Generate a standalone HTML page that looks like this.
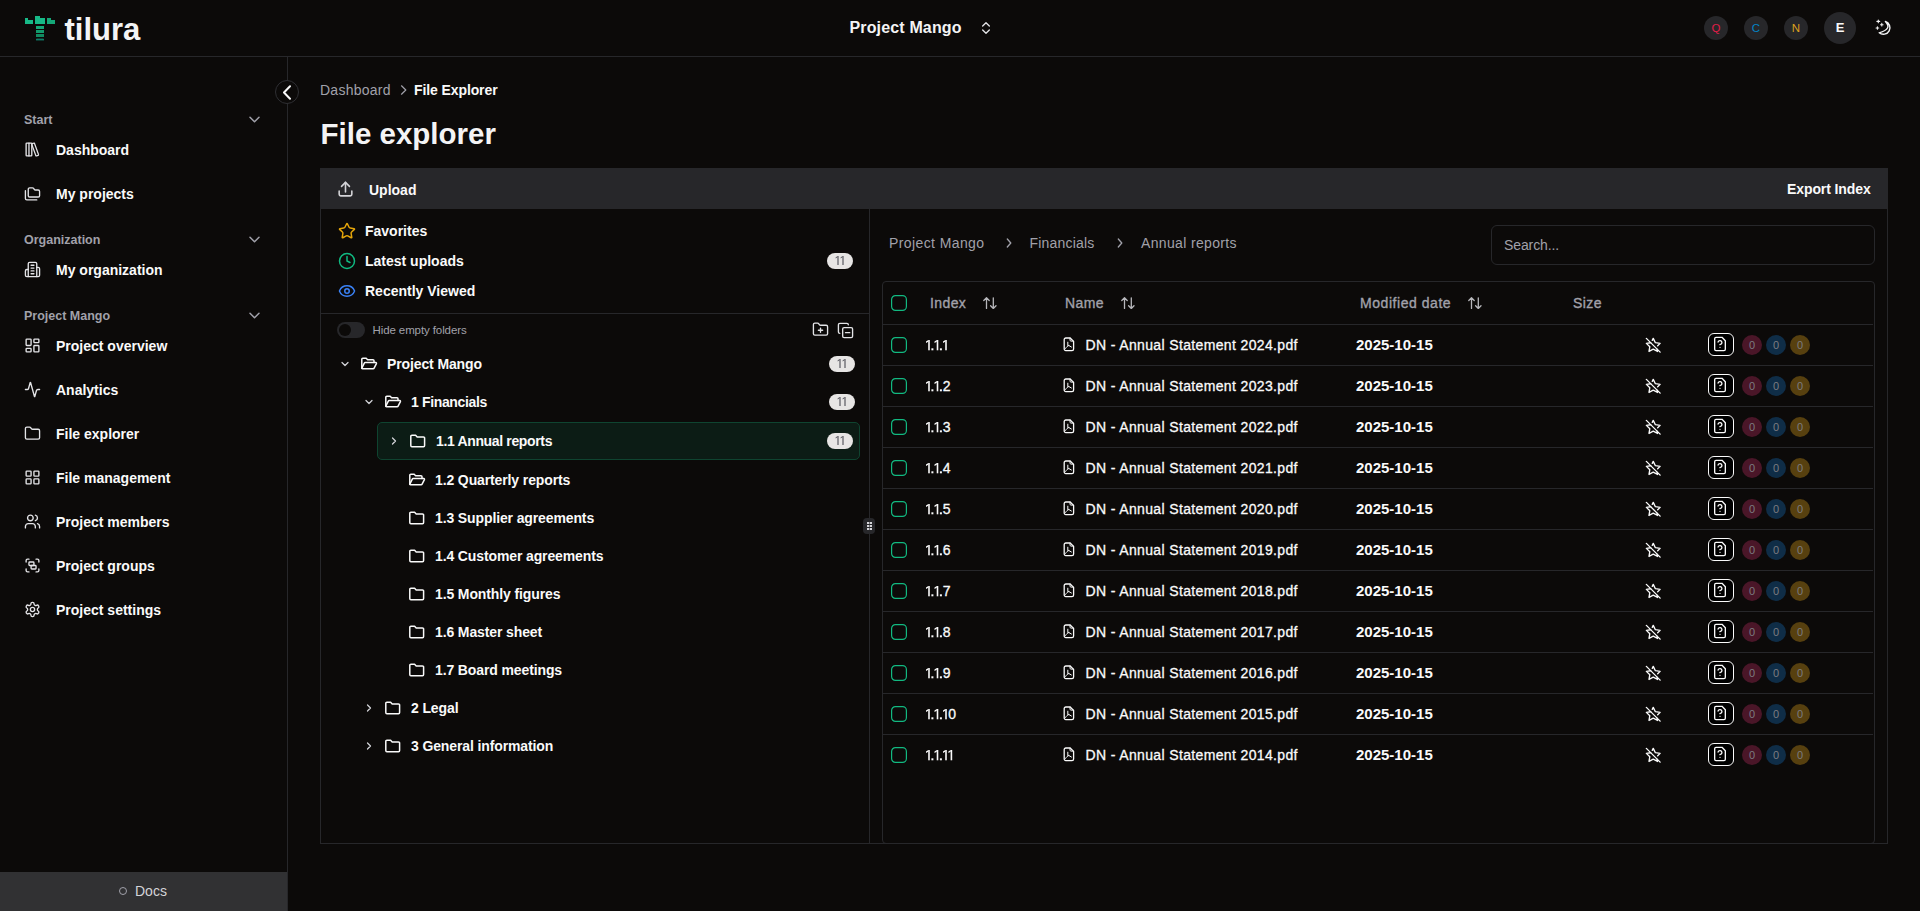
<!DOCTYPE html>
<html><head><meta charset="utf-8"><title>File explorer</title>
<style>
html,body{margin:0;padding:0;}
body{width:1920px;height:911px;overflow:hidden;background:#0c0a09;position:relative;font-family:"Liberation Sans",sans-serif;}
.t{position:absolute;white-space:nowrap;}
.b{position:absolute;box-sizing:content-box;}
.ic{position:absolute;}
.av{position:absolute;border-radius:50%;background:#27272a;text-align:center;display:flex;align-items:center;justify-content:center;font-family:"Liberation Sans",sans-serif;}
.badge{position:absolute;width:26px;height:16px;border-radius:8px;background:#e7e5e4;color:#57534e;font-size:11px;line-height:16px;text-align:center;letter-spacing:-0.5px;}
.cnt{position:absolute;width:20px;height:20px;border-radius:50%;color:#7c7c80;font-size:11px;line-height:20px;text-align:center;}
</style></head><body>
<div class="b" style="left:25px;top:18px;width:3px;height:6px;background:#17b987"></div>
<div class="b" style="left:28px;top:20px;width:5px;height:4px;background:#17b987"></div>
<div class="b" style="left:35px;top:16px;width:4.5px;height:8px;background:#17b987"></div>
<div class="b" style="left:39.5px;top:17.5px;width:5.5px;height:6.5px;background:#17b987"></div>
<div class="b" style="left:47px;top:18px;width:3.5px;height:6px;background:#15a878"></div>
<div class="b" style="left:50.5px;top:20px;width:4.5px;height:4px;background:#15a878"></div>
<div class="b" style="left:36px;top:26px;width:8px;height:3px;background:#15a878"></div>
<div class="b" style="left:36px;top:30px;width:8px;height:3px;background:#129a6c"></div>
<div class="b" style="left:36px;top:34px;width:8px;height:3px;background:#118a60"></div>
<svg class="ic" style="left:36px;top:38px" width="8" height="3" viewBox="0 0 8 3"><path d="M0 0.5 L1 2.5 L2 0.5 L3 2.5 L4 0.5 L5 2.5 L6 0.5 L7 2.5 L8 0.5" stroke="#0f7a66" stroke-width="1" fill="none"/></svg>
<div class="t" style="left:64.5px;top:12.0px;height:36px;line-height:36px;font-size:31px;font-weight:700;color:#f4f4f5;letter-spacing:0px;">tilura</div>
<div class="t" style="left:849.5px;top:15.5px;height:24px;line-height:24px;font-size:16px;font-weight:700;color:#f4f4f5;letter-spacing:0.15px;">Project Mango</div>
<svg class="ic" style="left:978px;top:20px;" width="16" height="16" viewBox="0 0 24 24" fill="none" stroke="#e4e4e7" stroke-width="2" stroke-linecap="round" stroke-linejoin="round"><path d="m7 15 5 5 5-5"/><path d="m7 9 5-5 5 5"/></svg>
<div class="av" style="left:1704px;top:15.5px;width:24px;height:24px;color:#e11d48;font-size:11.5px">Q</div>
<div class="av" style="left:1744px;top:15.5px;width:24px;height:24px;color:#0284c7;font-size:11.5px">C</div>
<div class="av" style="left:1784px;top:15.5px;width:24px;height:24px;color:#dca01e;font-size:11.5px">N</div>
<div class="av" style="left:1824px;top:11.5px;width:32px;height:32px;color:#fafafa;font-size:13px;font-weight:700">E</div>
<svg class="ic" style="left:1870px;top:14px;" width="28" height="28" viewBox="0 0 28 28" fill="none" stroke="#f4f4f5" stroke-width="1.4" stroke-linecap="round" stroke-linejoin="round"><path d="M15.4 7.4 A6.6 6.6 0 1 1 9.2 18.8 Q22.7 14.9 15.4 7.4 Z"/><path d="M8.3 6 v2.8 M6.9 7.4 h2.8 M11.8 9.4 v2.6 M10.5 10.7 h2.6 M7.4 12.7 v2.6 M6.1 14 h2.6" stroke-width="1.1"/></svg>
<div class="b" style="left:0px;top:56px;width:1920px;height:1px;background:#27272a"></div>
<div class="b" style="left:287px;top:57px;width:1px;height:854px;background:#27272a"></div>
<div class="t" style="left:24px;top:111.0px;height:18px;line-height:18px;font-size:12.5px;font-weight:700;color:#a1a1aa;letter-spacing:0px;">Start</div>
<svg class="ic" style="left:249px;top:116px;" width="11" height="7" viewBox="0 0 11 7" fill="none" stroke="#a1a1aa" stroke-width="1.5" stroke-linecap="round" stroke-linejoin="round"><path d="M1 1.2 L5.5 5.7 L10 1.2"/></svg>
<div class="t" style="left:24px;top:231.0px;height:18px;line-height:18px;font-size:12.5px;font-weight:700;color:#a1a1aa;letter-spacing:0px;">Organization</div>
<svg class="ic" style="left:249px;top:236px;" width="11" height="7" viewBox="0 0 11 7" fill="none" stroke="#a1a1aa" stroke-width="1.5" stroke-linecap="round" stroke-linejoin="round"><path d="M1 1.2 L5.5 5.7 L10 1.2"/></svg>
<div class="t" style="left:24px;top:307.0px;height:18px;line-height:18px;font-size:12.5px;font-weight:700;color:#a1a1aa;letter-spacing:0px;">Project Mango</div>
<svg class="ic" style="left:249px;top:312px;" width="11" height="7" viewBox="0 0 11 7" fill="none" stroke="#a1a1aa" stroke-width="1.5" stroke-linecap="round" stroke-linejoin="round"><path d="M1 1.2 L5.5 5.7 L10 1.2"/></svg>
<div class="t" style="left:56px;top:140.0px;height:20px;line-height:20px;font-size:14px;font-weight:700;color:#fafafa;letter-spacing:0px;">Dashboard</div>
<svg class="ic" style="left:23.8px;top:141.4px;" width="17" height="17" viewBox="0 0 24 24" fill="none" stroke="#e4e4e7" stroke-width="1.9" stroke-linecap="round" stroke-linejoin="round"><rect width="8" height="18" x="3" y="3" rx="1"/><path d="M7 3v18"/><path d="M20.4 18.9c.2.5-.1 1.1-.6 1.3l-1.9.7c-.5.2-1.1-.1-1.3-.6L11.1 5.1c-.2-.5.1-1.1.6-1.3l1.9-.7c.5-.2 1.1.1 1.3.6Z"/></svg>
<div class="t" style="left:56px;top:184.0px;height:20px;line-height:20px;font-size:14px;font-weight:700;color:#fafafa;letter-spacing:0px;">My projects</div>
<svg class="ic" style="left:23.8px;top:185.4px;" width="17" height="17" viewBox="0 0 24 24" fill="none" stroke="#e4e4e7" stroke-width="1.9" stroke-linecap="round" stroke-linejoin="round"><path d="M20 17a2 2 0 0 0 2-2V9a2 2 0 0 0-2-2h-3.9a2 2 0 0 1-1.69-.9l-.81-1.2a2 2 0 0 0-1.67-.9H8a2 2 0 0 0-2 2v9a2 2 0 0 0 2 2Z"/><path d="M2 8v11a2 2 0 0 0 2 2h14"/></svg>
<div class="t" style="left:56px;top:260.0px;height:20px;line-height:20px;font-size:14px;font-weight:700;color:#fafafa;letter-spacing:0px;">My organization</div>
<svg class="ic" style="left:23.8px;top:261.4px;" width="17" height="17" viewBox="0 0 24 24" fill="none" stroke="#e4e4e7" stroke-width="1.9" stroke-linecap="round" stroke-linejoin="round"><path d="M6 22V4a2 2 0 0 1 2-2h8a2 2 0 0 1 2 2v18Z"/><path d="M6 12H4a2 2 0 0 0-2 2v6a2 2 0 0 0 2 2h2"/><path d="M18 9h2a2 2 0 0 1 2 2v9a2 2 0 0 1-2 2h-2"/><path d="M10 6h4"/><path d="M10 10h4"/><path d="M10 14h4"/><path d="M10 18h4"/></svg>
<div class="t" style="left:56px;top:336.0px;height:20px;line-height:20px;font-size:14px;font-weight:700;color:#fafafa;letter-spacing:0px;">Project overview</div>
<svg class="ic" style="left:23.8px;top:337.4px;" width="17" height="17" viewBox="0 0 24 24" fill="none" stroke="#e4e4e7" stroke-width="1.9" stroke-linecap="round" stroke-linejoin="round"><rect width="7" height="9" x="3" y="3" rx="1"/><rect width="7" height="5" x="14" y="3" rx="1"/><rect width="7" height="9" x="14" y="12" rx="1"/><rect width="7" height="5" x="3" y="16" rx="1"/></svg>
<div class="t" style="left:56px;top:380.0px;height:20px;line-height:20px;font-size:14px;font-weight:700;color:#fafafa;letter-spacing:0px;">Analytics</div>
<svg class="ic" style="left:23.8px;top:381.4px;" width="17" height="17" viewBox="0 0 24 24" fill="none" stroke="#e4e4e7" stroke-width="1.9" stroke-linecap="round" stroke-linejoin="round"><path d="M22 12h-2.48a2 2 0 0 0-1.93 1.46l-2.35 8.36a.25.25 0 0 1-.48 0L9.24 2.18a.25.25 0 0 0-.48 0l-2.35 8.36A2 2 0 0 1 4.49 12H2"/></svg>
<div class="t" style="left:56px;top:424.0px;height:20px;line-height:20px;font-size:14px;font-weight:700;color:#fafafa;letter-spacing:0px;">File explorer</div>
<svg class="ic" style="left:23.8px;top:425.4px;" width="17" height="17" viewBox="0 0 24 24" fill="none" stroke="#e4e4e7" stroke-width="1.9" stroke-linecap="round" stroke-linejoin="round"><path d="M20 20a2 2 0 0 0 2-2V8a2 2 0 0 0-2-2h-7.9a2 2 0 0 1-1.69-.9L9.6 3.9A2 2 0 0 0 7.93 3H4a2 2 0 0 0-2 2v13a2 2 0 0 0 2 2Z"/></svg>
<div class="t" style="left:56px;top:468.0px;height:20px;line-height:20px;font-size:14px;font-weight:700;color:#fafafa;letter-spacing:0px;">File management</div>
<svg class="ic" style="left:23.8px;top:469.4px;" width="17" height="17" viewBox="0 0 24 24" fill="none" stroke="#e4e4e7" stroke-width="1.9" stroke-linecap="round" stroke-linejoin="round"><rect width="7" height="7" x="3" y="3" rx="1"/><rect width="7" height="7" x="14" y="3" rx="1"/><rect width="7" height="7" x="14" y="14" rx="1"/><rect width="7" height="7" x="3" y="14" rx="1"/></svg>
<div class="t" style="left:56px;top:512.0px;height:20px;line-height:20px;font-size:14px;font-weight:700;color:#fafafa;letter-spacing:0px;">Project members</div>
<svg class="ic" style="left:23.8px;top:513.4px;" width="17" height="17" viewBox="0 0 24 24" fill="none" stroke="#e4e4e7" stroke-width="1.9" stroke-linecap="round" stroke-linejoin="round"><path d="M16 21v-2a4 4 0 0 0-4-4H6a4 4 0 0 0-4 4v2"/><circle cx="9" cy="7" r="4"/><path d="M22 21v-2a4 4 0 0 0-3-3.87"/><path d="M16 3.13a4 4 0 0 1 0 7.75"/></svg>
<div class="t" style="left:56px;top:556.0px;height:20px;line-height:20px;font-size:14px;font-weight:700;color:#fafafa;letter-spacing:0px;">Project groups</div>
<svg class="ic" style="left:23.8px;top:557.4px;" width="17" height="17" viewBox="0 0 24 24" fill="none" stroke="#e4e4e7" stroke-width="1.9" stroke-linecap="round" stroke-linejoin="round"><path d="M3 7V5c0-1.1.9-2 2-2h2"/><path d="M17 3h2c1.1 0 2 .9 2 2v2"/><path d="M21 17v2c0 1.1-.9 2-2 2h-2"/><path d="M7 21H5c-1.1 0-2-.9-2-2v-2"/><rect width="7" height="5" x="7" y="7" rx="1"/><rect width="7" height="5" x="10" y="12" rx="1"/></svg>
<div class="t" style="left:56px;top:600.0px;height:20px;line-height:20px;font-size:14px;font-weight:700;color:#fafafa;letter-spacing:0px;">Project settings</div>
<svg class="ic" style="left:23.8px;top:601.4px;" width="17" height="17" viewBox="0 0 24 24" fill="none" stroke="#e4e4e7" stroke-width="1.9" stroke-linecap="round" stroke-linejoin="round"><path d="M12.22 2h-.44a2 2 0 0 0-2 2v.18a2 2 0 0 1-1 1.73l-.43.25a2 2 0 0 1-2 0l-.15-.08a2 2 0 0 0-2.73.73l-.22.38a2 2 0 0 0 .73 2.73l.15.1a2 2 0 0 1 1 1.72v.51a2 2 0 0 1-1 1.74l-.15.09a2 2 0 0 0-.73 2.73l.22.38a2 2 0 0 0 2.73.73l.15-.08a2 2 0 0 1 2 0l.43.25a2 2 0 0 1 1 1.73V20a2 2 0 0 0 2 2h.44a2 2 0 0 0 2-2v-.18a2 2 0 0 1 1-1.73l.43-.25a2 2 0 0 1 2 0l.15.08a2 2 0 0 0 2.73-.73l.22-.39a2 2 0 0 0-.73-2.73l-.15-.08a2 2 0 0 1-1-1.74v-.5a2 2 0 0 1 1-1.74l.15-.09a2 2 0 0 0 .73-2.73l-.22-.38a2 2 0 0 0-2.73-.73l-.15.08a2 2 0 0 1-2 0l-.43-.25a2 2 0 0 1-1-1.73V4a2 2 0 0 0-2-2z"/><circle cx="12" cy="12" r="3"/></svg>
<div class="b" style="left:0px;top:872px;width:287px;height:39px;background:#313133"></div>
<div class="b" style="left:119px;top:886.5px;width:6px;height:6px;border:1.3px solid #a1a1aa;border-radius:50%"></div>
<div class="t" style="left:135px;top:881.0px;height:20px;line-height:20px;font-size:14px;font-weight:400;color:#d4d4d8;letter-spacing:0px;">Docs</div>
<div class="b" style="left:275px;top:80px;width:22px;height:22px;border:1px solid #2f2f33;border-radius:50%;background:#0c0a09"></div>
<svg class="ic" style="left:282px;top:85px;" width="10" height="15" viewBox="0 0 10 15" fill="none" stroke="#fafafa" stroke-width="2" stroke-linecap="round" stroke-linejoin="round"><path d="M8 1.3 L2 7.5 L8 13.7"/></svg>
<div class="t" style="left:320px;top:80.0px;height:20px;line-height:20px;font-size:14px;font-weight:400;color:#a1a1aa;letter-spacing:0.25px;">Dashboard</div>
<svg class="ic" style="left:400px;top:85px;" width="8" height="10" viewBox="0 0 8 10" fill="none" stroke="#a1a1aa" stroke-width="1.2" stroke-linecap="round" stroke-linejoin="round"><path d="M1.5 0.8 L5.8 5 L1.5 9.2"/></svg>
<div class="t" style="left:414px;top:80.0px;height:20px;line-height:20px;font-size:14px;font-weight:700;color:#fafafa;letter-spacing:-0.1px;">File Explorer</div>
<div class="t" style="left:320.5px;top:115.5px;height:36px;line-height:36px;font-size:29.5px;font-weight:700;color:#f4f4f5;letter-spacing:0px;">File explorer</div>
<div class="b" style="left:320px;top:168px;width:1568px;height:41px;background:#27272a"></div>
<svg class="ic" style="left:335.5px;top:180px;" width="19" height="19" viewBox="0 0 24 24" fill="none" stroke="#d4d4d8" stroke-width="2" stroke-linecap="round" stroke-linejoin="round"><path d="M4 14v4a2 2 0 0 0 2 2h12a2 2 0 0 0 2-2v-4"/><path d="M12 3v12"/><path d="m7 8 5-5 5 5"/></svg>
<div class="t" style="left:369px;top:179.5px;height:20px;line-height:20px;font-size:14px;font-weight:700;color:#fafafa;letter-spacing:0px;">Upload</div>
<div class="t" style="left:1787px;top:179.0px;height:20px;line-height:20px;font-size:14px;font-weight:700;color:#fafafa;letter-spacing:-0.1px;">Export Index</div>
<div class="b" style="left:320px;top:209px;width:1px;height:635px;background:#27272a"></div>
<div class="b" style="left:1887px;top:209px;width:1px;height:635px;background:#27272a"></div>
<div class="b" style="left:320px;top:843px;width:1568px;height:1px;background:#27272a"></div>
<div class="b" style="left:869px;top:209px;width:1px;height:634px;background:#27272a"></div>
<svg class="ic" style="left:338px;top:222px;" width="18" height="18" viewBox="0 0 24 24" fill="none" stroke="#e5a50a" stroke-width="2" stroke-linecap="round" stroke-linejoin="round"><path d="M11.525 2.295a.53.53 0 0 1 .95 0l2.31 4.679a2.123 2.123 0 0 0 1.595 1.16l5.166.756a.53.53 0 0 1 .294.904l-3.736 3.638a2.123 2.123 0 0 0-.611 1.878l.882 5.14a.53.53 0 0 1-.771.56l-4.618-2.428a2.122 2.122 0 0 0-1.973 0L6.396 21.01a.53.53 0 0 1-.77-.56l.881-5.139a2.122 2.122 0 0 0-.611-1.879L2.16 9.795a.53.53 0 0 1 .294-.906l5.165-.755a2.122 2.122 0 0 0 1.597-1.16z"/></svg>
<div class="t" style="left:365px;top:221.0px;height:20px;line-height:20px;font-size:14px;font-weight:700;color:#fafafa;letter-spacing:0px;">Favorites</div>
<svg class="ic" style="left:338px;top:252px;" width="18" height="18" viewBox="0 0 24 24" fill="none" stroke="#10b981" stroke-width="2" stroke-linecap="round" stroke-linejoin="round"><circle cx="12" cy="12" r="10"/><polyline points="12 6 12 12 16 14"/></svg>
<div class="t" style="left:365px;top:251.0px;height:20px;line-height:20px;font-size:14px;font-weight:700;color:#fafafa;letter-spacing:0px;">Latest uploads</div>
<svg class="ic" style="left:338px;top:282px;" width="18" height="18" viewBox="0 0 24 24" fill="none" stroke="#3b82f6" stroke-width="2" stroke-linecap="round" stroke-linejoin="round"><path d="M2.062 12.348a1 1 0 0 1 0-.696 10.75 10.75 0 0 1 19.876 0 1 1 0 0 1 0 .696 10.75 10.75 0 0 1-19.876 0"/><circle cx="12" cy="12" r="3"/></svg>
<div class="t" style="left:365px;top:281.0px;height:20px;line-height:20px;font-size:14px;font-weight:700;color:#fafafa;letter-spacing:0px;">Recently Viewed</div>
<div class="badge" style="left:827px;top:253px"><svg width="26" height="16" viewBox="0 0 26 16" fill="#5a5a62" style="position:absolute;left:0;top:0"><rect x="10.4" y="3" width="1.2" height="9"/><path d="M8.6 4.5 L10.5 3 L10.5 4.3 L8.6 5.5 Z"/><rect x="15.4" y="3" width="1.2" height="9"/><path d="M13.6 4.5 L15.5 3 L15.5 4.3 L13.6 5.5 Z"/></svg></div>
<div class="b" style="left:321px;top:313px;width:548px;height:1px;background:#27272a"></div>
<div class="b" style="left:337px;top:322px;width:28px;height:16px;border-radius:8px;background:#27272a"></div>
<div class="b" style="left:339px;top:324px;width:12px;height:12px;border-radius:50%;background:#0c0a09"></div>
<div class="t" style="left:372.5px;top:322.0px;height:16px;line-height:16px;font-size:11.5px;font-weight:400;color:#a1a1aa;letter-spacing:-0.1px;">Hide empty folders</div>
<svg class="ic" style="left:812.3px;top:321.1px;" width="17" height="17" viewBox="0 0 24 24" fill="none" stroke="#e4e4e7" stroke-width="1.9" stroke-linecap="round" stroke-linejoin="round"><path d="M12 10v6"/><path d="M9 13h6"/><path d="M20 20a2 2 0 0 0 2-2V8a2 2 0 0 0-2-2h-7.9a2 2 0 0 1-1.69-.9L9.6 3.9A2 2 0 0 0 7.93 3H4a2 2 0 0 0-2 2v13a2 2 0 0 0 2 2Z"/></svg>
<svg class="ic" style="left:836.5px;top:321.6px;" width="17" height="17" viewBox="0 0 24 24" fill="none" stroke="#e4e4e7" stroke-width="1.9" stroke-linecap="round" stroke-linejoin="round"><line x1="12" x2="18" y1="15" y2="15"/><rect width="14" height="14" x="8" y="8" rx="2" ry="2"/><path d="M4 16c-1.1 0-2-.9-2-2V4c0-1.1.9-2 2-2h10c1.1 0 2 .9 2 2"/></svg>
<div class="b" style="left:377px;top:422px;width:481px;height:36px;border:1px solid #0f4430;border-radius:5px;background:#0c1c15"></div>
<svg class="ic" style="left:339px;top:358px;" width="12" height="12" viewBox="0 0 24 24" fill="none" stroke="#d4d4d8" stroke-width="2.5" stroke-linecap="round" stroke-linejoin="round"><path d="m6 9 6 6 6-6"/></svg>
<svg class="ic" style="left:360px;top:357px;" width="18" height="14" viewBox="0 0 18 14" fill="none" stroke="#fafafa" stroke-width="1.5" stroke-linecap="round" stroke-linejoin="round"><path d="M1.8 11.2 V2.3 a1 1 0 0 1 1-1 h3.4 l1.4 1.5 h5.4 a1 1 0 0 1 1 1 v1.7"/><path d="M1.8 11.2 l2.5-5 a1 1 0 0 1 .9-.6 h10.6 a.7 .7 0 0 1 .6 1 l-2.3 4.5 a1.2 1.2 0 0 1 -1 .7 h-10.4 a.8 .8 0 0 1 -.8 -.6 z"/></svg>
<div class="t" style="left:387px;top:354.0px;height:20px;line-height:20px;font-size:14px;font-weight:700;color:#fafafa;letter-spacing:-0.12px;">Project Mango</div>
<div class="badge" style="left:829px;top:356px"><svg width="26" height="16" viewBox="0 0 26 16" fill="#5a5a62" style="position:absolute;left:0;top:0"><rect x="10.4" y="3" width="1.2" height="9"/><path d="M8.6 4.5 L10.5 3 L10.5 4.3 L8.6 5.5 Z"/><rect x="15.4" y="3" width="1.2" height="9"/><path d="M13.6 4.5 L15.5 3 L15.5 4.3 L13.6 5.5 Z"/></svg></div>
<svg class="ic" style="left:363px;top:396px;" width="12" height="12" viewBox="0 0 24 24" fill="none" stroke="#d4d4d8" stroke-width="2.5" stroke-linecap="round" stroke-linejoin="round"><path d="m6 9 6 6 6-6"/></svg>
<svg class="ic" style="left:384px;top:395px;" width="18" height="14" viewBox="0 0 18 14" fill="none" stroke="#fafafa" stroke-width="1.5" stroke-linecap="round" stroke-linejoin="round"><path d="M1.8 11.2 V2.3 a1 1 0 0 1 1-1 h3.4 l1.4 1.5 h5.4 a1 1 0 0 1 1 1 v1.7"/><path d="M1.8 11.2 l2.5-5 a1 1 0 0 1 .9-.6 h10.6 a.7 .7 0 0 1 .6 1 l-2.3 4.5 a1.2 1.2 0 0 1 -1 .7 h-10.4 a.8 .8 0 0 1 -.8 -.6 z"/></svg>
<div class="t" style="left:411px;top:392.0px;height:20px;line-height:20px;font-size:14px;font-weight:700;color:#fafafa;letter-spacing:-0.35px;">1 Financials</div>
<div class="badge" style="left:829px;top:394px"><svg width="26" height="16" viewBox="0 0 26 16" fill="#5a5a62" style="position:absolute;left:0;top:0"><rect x="10.4" y="3" width="1.2" height="9"/><path d="M8.6 4.5 L10.5 3 L10.5 4.3 L8.6 5.5 Z"/><rect x="15.4" y="3" width="1.2" height="9"/><path d="M13.6 4.5 L15.5 3 L15.5 4.3 L13.6 5.5 Z"/></svg></div>
<svg class="ic" style="left:388px;top:435px;" width="12" height="12" viewBox="0 0 24 24" fill="none" stroke="#d4d4d8" stroke-width="2.5" stroke-linecap="round" stroke-linejoin="round"><path d="m9 18 6-6-6-6"/></svg>
<svg class="ic" style="left:409px;top:434px;" width="18" height="14" viewBox="0 0 18 14" fill="none" stroke="#fafafa" stroke-width="1.5" stroke-linecap="round" stroke-linejoin="round"><path d="M1.8 2.3 a1.1 1.1 0 0 1 1.1-1.1 h3.7 l1.6 1.7 h6.3 a1.1 1.1 0 0 1 1.1 1.1 v7.6 a1.1 1.1 0 0 1 -1.1 1.1 h-11.6 a1.1 1.1 0 0 1 -1.1 -1.1 z"/></svg>
<div class="t" style="left:436px;top:431.0px;height:20px;line-height:20px;font-size:14px;font-weight:700;color:#fafafa;letter-spacing:-0.35px;">1.1 Annual reports</div>
<div class="badge" style="left:827px;top:433px"><svg width="26" height="16" viewBox="0 0 26 16" fill="#5a5a62" style="position:absolute;left:0;top:0"><rect x="10.4" y="3" width="1.2" height="9"/><path d="M8.6 4.5 L10.5 3 L10.5 4.3 L8.6 5.5 Z"/><rect x="15.4" y="3" width="1.2" height="9"/><path d="M13.6 4.5 L15.5 3 L15.5 4.3 L13.6 5.5 Z"/></svg></div>
<svg class="ic" style="left:408px;top:473px;" width="18" height="14" viewBox="0 0 18 14" fill="none" stroke="#fafafa" stroke-width="1.5" stroke-linecap="round" stroke-linejoin="round"><path d="M1.8 11.2 V2.3 a1 1 0 0 1 1-1 h3.4 l1.4 1.5 h5.4 a1 1 0 0 1 1 1 v1.7"/><path d="M1.8 11.2 l2.5-5 a1 1 0 0 1 .9-.6 h10.6 a.7 .7 0 0 1 .6 1 l-2.3 4.5 a1.2 1.2 0 0 1 -1 .7 h-10.4 a.8 .8 0 0 1 -.8 -.6 z"/></svg>
<div class="t" style="left:435px;top:470.0px;height:20px;line-height:20px;font-size:14px;font-weight:700;color:#fafafa;letter-spacing:-0.12px;">1.2 Quarterly reports</div>
<svg class="ic" style="left:408px;top:511px;" width="18" height="14" viewBox="0 0 18 14" fill="none" stroke="#fafafa" stroke-width="1.5" stroke-linecap="round" stroke-linejoin="round"><path d="M1.8 2.3 a1.1 1.1 0 0 1 1.1-1.1 h3.7 l1.6 1.7 h6.3 a1.1 1.1 0 0 1 1.1 1.1 v7.6 a1.1 1.1 0 0 1 -1.1 1.1 h-11.6 a1.1 1.1 0 0 1 -1.1 -1.1 z"/></svg>
<div class="t" style="left:435px;top:508.0px;height:20px;line-height:20px;font-size:14px;font-weight:700;color:#fafafa;letter-spacing:-0.12px;">1.3 Supplier agreements</div>
<svg class="ic" style="left:408px;top:549px;" width="18" height="14" viewBox="0 0 18 14" fill="none" stroke="#fafafa" stroke-width="1.5" stroke-linecap="round" stroke-linejoin="round"><path d="M1.8 2.3 a1.1 1.1 0 0 1 1.1-1.1 h3.7 l1.6 1.7 h6.3 a1.1 1.1 0 0 1 1.1 1.1 v7.6 a1.1 1.1 0 0 1 -1.1 1.1 h-11.6 a1.1 1.1 0 0 1 -1.1 -1.1 z"/></svg>
<div class="t" style="left:435px;top:546.0px;height:20px;line-height:20px;font-size:14px;font-weight:700;color:#fafafa;letter-spacing:-0.12px;">1.4 Customer agreements</div>
<svg class="ic" style="left:408px;top:587px;" width="18" height="14" viewBox="0 0 18 14" fill="none" stroke="#fafafa" stroke-width="1.5" stroke-linecap="round" stroke-linejoin="round"><path d="M1.8 2.3 a1.1 1.1 0 0 1 1.1-1.1 h3.7 l1.6 1.7 h6.3 a1.1 1.1 0 0 1 1.1 1.1 v7.6 a1.1 1.1 0 0 1 -1.1 1.1 h-11.6 a1.1 1.1 0 0 1 -1.1 -1.1 z"/></svg>
<div class="t" style="left:435px;top:584.0px;height:20px;line-height:20px;font-size:14px;font-weight:700;color:#fafafa;letter-spacing:-0.12px;">1.5 Monthly figures</div>
<svg class="ic" style="left:408px;top:625px;" width="18" height="14" viewBox="0 0 18 14" fill="none" stroke="#fafafa" stroke-width="1.5" stroke-linecap="round" stroke-linejoin="round"><path d="M1.8 2.3 a1.1 1.1 0 0 1 1.1-1.1 h3.7 l1.6 1.7 h6.3 a1.1 1.1 0 0 1 1.1 1.1 v7.6 a1.1 1.1 0 0 1 -1.1 1.1 h-11.6 a1.1 1.1 0 0 1 -1.1 -1.1 z"/></svg>
<div class="t" style="left:435px;top:622.0px;height:20px;line-height:20px;font-size:14px;font-weight:700;color:#fafafa;letter-spacing:-0.12px;">1.6 Master sheet</div>
<svg class="ic" style="left:408px;top:663px;" width="18" height="14" viewBox="0 0 18 14" fill="none" stroke="#fafafa" stroke-width="1.5" stroke-linecap="round" stroke-linejoin="round"><path d="M1.8 2.3 a1.1 1.1 0 0 1 1.1-1.1 h3.7 l1.6 1.7 h6.3 a1.1 1.1 0 0 1 1.1 1.1 v7.6 a1.1 1.1 0 0 1 -1.1 1.1 h-11.6 a1.1 1.1 0 0 1 -1.1 -1.1 z"/></svg>
<div class="t" style="left:435px;top:660.0px;height:20px;line-height:20px;font-size:14px;font-weight:700;color:#fafafa;letter-spacing:-0.12px;">1.7 Board meetings</div>
<svg class="ic" style="left:363px;top:702px;" width="12" height="12" viewBox="0 0 24 24" fill="none" stroke="#d4d4d8" stroke-width="2.5" stroke-linecap="round" stroke-linejoin="round"><path d="m9 18 6-6-6-6"/></svg>
<svg class="ic" style="left:384px;top:701px;" width="18" height="14" viewBox="0 0 18 14" fill="none" stroke="#fafafa" stroke-width="1.5" stroke-linecap="round" stroke-linejoin="round"><path d="M1.8 2.3 a1.1 1.1 0 0 1 1.1-1.1 h3.7 l1.6 1.7 h6.3 a1.1 1.1 0 0 1 1.1 1.1 v7.6 a1.1 1.1 0 0 1 -1.1 1.1 h-11.6 a1.1 1.1 0 0 1 -1.1 -1.1 z"/></svg>
<div class="t" style="left:411px;top:698.0px;height:20px;line-height:20px;font-size:14px;font-weight:700;color:#fafafa;letter-spacing:-0.12px;">2 Legal</div>
<svg class="ic" style="left:363px;top:740px;" width="12" height="12" viewBox="0 0 24 24" fill="none" stroke="#d4d4d8" stroke-width="2.5" stroke-linecap="round" stroke-linejoin="round"><path d="m9 18 6-6-6-6"/></svg>
<svg class="ic" style="left:384px;top:739px;" width="18" height="14" viewBox="0 0 18 14" fill="none" stroke="#fafafa" stroke-width="1.5" stroke-linecap="round" stroke-linejoin="round"><path d="M1.8 2.3 a1.1 1.1 0 0 1 1.1-1.1 h3.7 l1.6 1.7 h6.3 a1.1 1.1 0 0 1 1.1 1.1 v7.6 a1.1 1.1 0 0 1 -1.1 1.1 h-11.6 a1.1 1.1 0 0 1 -1.1 -1.1 z"/></svg>
<div class="t" style="left:411px;top:736.0px;height:20px;line-height:20px;font-size:14px;font-weight:700;color:#fafafa;letter-spacing:-0.12px;">3 General information</div>
<div class="b" style="left:863px;top:518px;width:12px;height:16px;border-radius:4px;background:#27272a"></div>
<div class="b" style="left:867px;top:522px;width:1.6px;height:1.8px;background:#d4d4d8"></div><div class="b" style="left:870.4px;top:522px;width:1.6px;height:1.8px;background:#d4d4d8"></div>
<div class="b" style="left:868.6px;top:522px;width:1.8px;height:1.8px;background:#6b6b70"></div>
<div class="b" style="left:867px;top:525px;width:1.6px;height:1.8px;background:#d4d4d8"></div><div class="b" style="left:870.4px;top:525px;width:1.6px;height:1.8px;background:#d4d4d8"></div>
<div class="b" style="left:868.6px;top:525px;width:1.8px;height:1.8px;background:#6b6b70"></div>
<div class="b" style="left:867px;top:528px;width:1.6px;height:1.8px;background:#d4d4d8"></div><div class="b" style="left:870.4px;top:528px;width:1.6px;height:1.8px;background:#d4d4d8"></div>
<div class="b" style="left:868.6px;top:528px;width:1.8px;height:1.8px;background:#6b6b70"></div>
<div class="t" style="left:889px;top:233.0px;height:20px;line-height:20px;font-size:14px;font-weight:400;color:#a1a1aa;letter-spacing:0.4px;">Project Mango</div>
<svg class="ic" style="left:1006px;top:238px;" width="8" height="10" viewBox="0 0 8 10" fill="none" stroke="#a1a1aa" stroke-width="1.3" stroke-linecap="round" stroke-linejoin="round"><path d="M1.3 1 L4.8 5 L1.3 9"/></svg>
<div class="t" style="left:1029.5px;top:233.0px;height:20px;line-height:20px;font-size:14px;font-weight:400;color:#a1a1aa;letter-spacing:0.2px;">Financials</div>
<svg class="ic" style="left:1117px;top:238px;" width="8" height="10" viewBox="0 0 8 10" fill="none" stroke="#a1a1aa" stroke-width="1.3" stroke-linecap="round" stroke-linejoin="round"><path d="M1.3 1 L4.8 5 L1.3 9"/></svg>
<div class="t" style="left:1141px;top:233.0px;height:20px;line-height:20px;font-size:14px;font-weight:400;color:#a1a1aa;letter-spacing:0.35px;">Annual reports</div>
<div class="b" style="left:1491px;top:225px;width:382px;height:38px;border:1px solid #27272a;border-radius:6px"></div>
<div class="t" style="left:1504px;top:235.0px;height:20px;line-height:20px;font-size:14px;font-weight:400;color:#a1a1aa;letter-spacing:-0.1px;">Search...</div>
<div class="b" style="left:882px;top:281px;width:991px;height:561px;border:1px solid #27272a;border-radius:4px"></div>
<svg class="ic" style="left:891px;top:295px" width="16" height="16" viewBox="0 0 16 16"><rect x="0.6" y="0.6" width="14.8" height="14.8" rx="3.8" fill="none" stroke="#12b981" stroke-width="1.2"/></svg>
<div class="t" style="left:930px;top:293.0px;height:20px;line-height:20px;font-size:14px;font-weight:400;color:#a1a1aa;letter-spacing:0.4px;-webkit-text-stroke:0.35px #a1a1aa;">Index</div>
<svg class="ic" style="left:983px;top:297px;" width="14" height="12" viewBox="0 0 14 12" fill="none" stroke="#b8b8bc" stroke-width="1.3" stroke-linecap="round" stroke-linejoin="round"><path d="M3.5 11.5 V0.8 M0.8 3.5 L3.5 0.8 L6.2 3.5 M10.3 0.8 V11.5 M7.6 8.8 L10.3 11.5 L13 8.8"/></svg>
<div class="t" style="left:1065px;top:293.0px;height:20px;line-height:20px;font-size:14px;font-weight:400;color:#a1a1aa;letter-spacing:0.4px;-webkit-text-stroke:0.35px #a1a1aa;">Name</div>
<svg class="ic" style="left:1121px;top:297px;" width="14" height="12" viewBox="0 0 14 12" fill="none" stroke="#b8b8bc" stroke-width="1.3" stroke-linecap="round" stroke-linejoin="round"><path d="M3.5 11.5 V0.8 M0.8 3.5 L3.5 0.8 L6.2 3.5 M10.3 0.8 V11.5 M7.6 8.8 L10.3 11.5 L13 8.8"/></svg>
<div class="t" style="left:1360px;top:293.0px;height:20px;line-height:20px;font-size:14px;font-weight:400;color:#a1a1aa;letter-spacing:0.55px;-webkit-text-stroke:0.35px #a1a1aa;">Modified date</div>
<svg class="ic" style="left:1468px;top:297px;" width="14" height="12" viewBox="0 0 14 12" fill="none" stroke="#b8b8bc" stroke-width="1.3" stroke-linecap="round" stroke-linejoin="round"><path d="M3.5 11.5 V0.8 M0.8 3.5 L3.5 0.8 L6.2 3.5 M10.3 0.8 V11.5 M7.6 8.8 L10.3 11.5 L13 8.8"/></svg>
<div class="t" style="left:1573px;top:293.0px;height:20px;line-height:20px;font-size:14px;font-weight:400;color:#a1a1aa;letter-spacing:0.4px;-webkit-text-stroke:0.35px #a1a1aa;">Size</div>
<div class="b" style="left:883px;top:324px;width:990px;height:1px;background:#27272a"></div>
<div class="b" style="left:883px;top:365px;width:990px;height:1px;background:#27272a"></div>
<svg class="ic" style="left:891px;top:337px" width="16" height="16" viewBox="0 0 16 16"><rect x="0.6" y="0.6" width="14.8" height="14.8" rx="3.8" fill="none" stroke="#12b981" stroke-width="1.2"/></svg>
<svg class="ic" style="left:926px;top:338.7px" width="40" height="14" viewBox="0 0 40 14" fill="#fafafa"><rect x="2.20" y="1" width="1.6" height="10.3"/><path d="M0.00 2.6 L2.30 1 L2.30 2.7 L0.00 4.0 Z"/><rect x="5.40" y="9.3" width="2" height="2"/><rect x="10.70" y="1" width="1.6" height="10.3"/><path d="M8.50 2.6 L10.80 1 L10.80 2.7 L8.50 4.0 Z"/><rect x="13.90" y="9.3" width="2" height="2"/><rect x="19.20" y="1" width="1.6" height="10.3"/><path d="M17.00 2.6 L19.30 1 L19.30 2.7 L17.00 4.0 Z"/></svg>
<svg class="ic" style="left:1063.2px;top:337px;" width="12" height="15" viewBox="0 0 12 15" fill="none" stroke="#fafafa" stroke-width="1.3" stroke-linecap="round" stroke-linejoin="round"><path d="M1.2 2.6a1.6 1.6 0 0 1 1.6-1.6h4.4l3.4 3.4v7.6a1.6 1.6 0 0 1-1.6 1.6h-6.2a1.6 1.6 0 0 1-1.6-1.6z"/><path d="M7 1.2v1.9a1 1 0 0 0 1 1h2.2" stroke-width="1"/><path d="M4.8 5.2v3.2 M2.6 11.4c.9-1.5 2-2.6 3.2-2.9 M5.8 8.5l2.6 1.5" stroke-width="1"/></svg>
<div class="t" style="left:1085.5px;top:335.0px;height:20px;line-height:20px;font-size:14px;font-weight:400;color:#fafafa;letter-spacing:0.36px;-webkit-text-stroke:0.3px #fafafa;">DN - Annual Statement 2024.pdf</div>
<div class="t" style="left:1356px;top:335.0px;height:20px;line-height:20px;font-size:15px;font-weight:700;color:#fafafa;letter-spacing:0px;">2025-10-15</div>
<svg class="ic" style="left:1645.3px;top:336.8px;" width="16.5" height="16.5" viewBox="0 0 24 24" fill="none" stroke="#fafafa" stroke-width="2" stroke-linecap="round" stroke-linejoin="round"><path d="M8.34 8.34 2 9.27l5 4.87L5.82 21 12 17.77 18.18 21l-.59-3.43"/><path d="M18.42 12.76 22 9.27l-6.91-1L12 2l-1.44 2.91"/><line x1="2" x2="22" y1="2" y2="22"/></svg>
<div class="b" style="left:1708px;top:332.5px;width:23.5px;height:21px;border:1.5px solid #fafafa;border-radius:6px;background:#000"></div>
<svg class="ic" style="left:1712px;top:336px;" width="16" height="16" viewBox="0 0 24 24" fill="none" stroke="#fafafa" stroke-width="2" stroke-linecap="round" stroke-linejoin="round"><path d="M12 17h.01"/><path d="M15 2H6a2 2 0 0 0-2 2v16a2 2 0 0 0 2 2h12a2 2 0 0 0 2-2V7z"/><path d="M9.1 9a3 3 0 0 1 5.82 1c0 2-3 3-3 3"/></svg>
<div class="cnt" style="left:1742px;top:334.5px;background:#4a1628">0</div>
<div class="cnt" style="left:1766px;top:334.5px;background:#0f2d47">0</div>
<div class="cnt" style="left:1790px;top:334.5px;background:#57400f">0</div>
<div class="b" style="left:883px;top:406px;width:990px;height:1px;background:#27272a"></div>
<svg class="ic" style="left:891px;top:378px" width="16" height="16" viewBox="0 0 16 16"><rect x="0.6" y="0.6" width="14.8" height="14.8" rx="3.8" fill="none" stroke="#12b981" stroke-width="1.2"/></svg>
<svg class="ic" style="left:926px;top:379.7px" width="40" height="14" viewBox="0 0 40 14" fill="#fafafa"><rect x="2.20" y="1" width="1.6" height="10.3"/><path d="M0.00 2.6 L2.30 1 L2.30 2.7 L0.00 4.0 Z"/><rect x="5.40" y="9.3" width="2" height="2"/><rect x="10.70" y="1" width="1.6" height="10.3"/><path d="M8.50 2.6 L10.80 1 L10.80 2.7 L8.50 4.0 Z"/><rect x="13.90" y="9.3" width="2" height="2"/><text x="16.80" y="11.3" font-family="Liberation Sans" font-size="14" stroke="#fafafa" stroke-width="0.3">2</text></svg>
<svg class="ic" style="left:1063.2px;top:378px;" width="12" height="15" viewBox="0 0 12 15" fill="none" stroke="#fafafa" stroke-width="1.3" stroke-linecap="round" stroke-linejoin="round"><path d="M1.2 2.6a1.6 1.6 0 0 1 1.6-1.6h4.4l3.4 3.4v7.6a1.6 1.6 0 0 1-1.6 1.6h-6.2a1.6 1.6 0 0 1-1.6-1.6z"/><path d="M7 1.2v1.9a1 1 0 0 0 1 1h2.2" stroke-width="1"/><path d="M4.8 5.2v3.2 M2.6 11.4c.9-1.5 2-2.6 3.2-2.9 M5.8 8.5l2.6 1.5" stroke-width="1"/></svg>
<div class="t" style="left:1085.5px;top:376.0px;height:20px;line-height:20px;font-size:14px;font-weight:400;color:#fafafa;letter-spacing:0.36px;-webkit-text-stroke:0.3px #fafafa;">DN - Annual Statement 2023.pdf</div>
<div class="t" style="left:1356px;top:376.0px;height:20px;line-height:20px;font-size:15px;font-weight:700;color:#fafafa;letter-spacing:0px;">2025-10-15</div>
<svg class="ic" style="left:1645.3px;top:377.8px;" width="16.5" height="16.5" viewBox="0 0 24 24" fill="none" stroke="#fafafa" stroke-width="2" stroke-linecap="round" stroke-linejoin="round"><path d="M8.34 8.34 2 9.27l5 4.87L5.82 21 12 17.77 18.18 21l-.59-3.43"/><path d="M18.42 12.76 22 9.27l-6.91-1L12 2l-1.44 2.91"/><line x1="2" x2="22" y1="2" y2="22"/></svg>
<div class="b" style="left:1708px;top:373.5px;width:23.5px;height:21px;border:1.5px solid #fafafa;border-radius:6px;background:#000"></div>
<svg class="ic" style="left:1712px;top:377px;" width="16" height="16" viewBox="0 0 24 24" fill="none" stroke="#fafafa" stroke-width="2" stroke-linecap="round" stroke-linejoin="round"><path d="M12 17h.01"/><path d="M15 2H6a2 2 0 0 0-2 2v16a2 2 0 0 0 2 2h12a2 2 0 0 0 2-2V7z"/><path d="M9.1 9a3 3 0 0 1 5.82 1c0 2-3 3-3 3"/></svg>
<div class="cnt" style="left:1742px;top:375.5px;background:#4a1628">0</div>
<div class="cnt" style="left:1766px;top:375.5px;background:#0f2d47">0</div>
<div class="cnt" style="left:1790px;top:375.5px;background:#57400f">0</div>
<div class="b" style="left:883px;top:447px;width:990px;height:1px;background:#27272a"></div>
<svg class="ic" style="left:891px;top:419px" width="16" height="16" viewBox="0 0 16 16"><rect x="0.6" y="0.6" width="14.8" height="14.8" rx="3.8" fill="none" stroke="#12b981" stroke-width="1.2"/></svg>
<svg class="ic" style="left:926px;top:420.7px" width="40" height="14" viewBox="0 0 40 14" fill="#fafafa"><rect x="2.20" y="1" width="1.6" height="10.3"/><path d="M0.00 2.6 L2.30 1 L2.30 2.7 L0.00 4.0 Z"/><rect x="5.40" y="9.3" width="2" height="2"/><rect x="10.70" y="1" width="1.6" height="10.3"/><path d="M8.50 2.6 L10.80 1 L10.80 2.7 L8.50 4.0 Z"/><rect x="13.90" y="9.3" width="2" height="2"/><text x="16.80" y="11.3" font-family="Liberation Sans" font-size="14" stroke="#fafafa" stroke-width="0.3">3</text></svg>
<svg class="ic" style="left:1063.2px;top:419px;" width="12" height="15" viewBox="0 0 12 15" fill="none" stroke="#fafafa" stroke-width="1.3" stroke-linecap="round" stroke-linejoin="round"><path d="M1.2 2.6a1.6 1.6 0 0 1 1.6-1.6h4.4l3.4 3.4v7.6a1.6 1.6 0 0 1-1.6 1.6h-6.2a1.6 1.6 0 0 1-1.6-1.6z"/><path d="M7 1.2v1.9a1 1 0 0 0 1 1h2.2" stroke-width="1"/><path d="M4.8 5.2v3.2 M2.6 11.4c.9-1.5 2-2.6 3.2-2.9 M5.8 8.5l2.6 1.5" stroke-width="1"/></svg>
<div class="t" style="left:1085.5px;top:417.0px;height:20px;line-height:20px;font-size:14px;font-weight:400;color:#fafafa;letter-spacing:0.36px;-webkit-text-stroke:0.3px #fafafa;">DN - Annual Statement 2022.pdf</div>
<div class="t" style="left:1356px;top:417.0px;height:20px;line-height:20px;font-size:15px;font-weight:700;color:#fafafa;letter-spacing:0px;">2025-10-15</div>
<svg class="ic" style="left:1645.3px;top:418.8px;" width="16.5" height="16.5" viewBox="0 0 24 24" fill="none" stroke="#fafafa" stroke-width="2" stroke-linecap="round" stroke-linejoin="round"><path d="M8.34 8.34 2 9.27l5 4.87L5.82 21 12 17.77 18.18 21l-.59-3.43"/><path d="M18.42 12.76 22 9.27l-6.91-1L12 2l-1.44 2.91"/><line x1="2" x2="22" y1="2" y2="22"/></svg>
<div class="b" style="left:1708px;top:414.5px;width:23.5px;height:21px;border:1.5px solid #fafafa;border-radius:6px;background:#000"></div>
<svg class="ic" style="left:1712px;top:418px;" width="16" height="16" viewBox="0 0 24 24" fill="none" stroke="#fafafa" stroke-width="2" stroke-linecap="round" stroke-linejoin="round"><path d="M12 17h.01"/><path d="M15 2H6a2 2 0 0 0-2 2v16a2 2 0 0 0 2 2h12a2 2 0 0 0 2-2V7z"/><path d="M9.1 9a3 3 0 0 1 5.82 1c0 2-3 3-3 3"/></svg>
<div class="cnt" style="left:1742px;top:416.5px;background:#4a1628">0</div>
<div class="cnt" style="left:1766px;top:416.5px;background:#0f2d47">0</div>
<div class="cnt" style="left:1790px;top:416.5px;background:#57400f">0</div>
<div class="b" style="left:883px;top:488px;width:990px;height:1px;background:#27272a"></div>
<svg class="ic" style="left:891px;top:460px" width="16" height="16" viewBox="0 0 16 16"><rect x="0.6" y="0.6" width="14.8" height="14.8" rx="3.8" fill="none" stroke="#12b981" stroke-width="1.2"/></svg>
<svg class="ic" style="left:926px;top:461.7px" width="40" height="14" viewBox="0 0 40 14" fill="#fafafa"><rect x="2.20" y="1" width="1.6" height="10.3"/><path d="M0.00 2.6 L2.30 1 L2.30 2.7 L0.00 4.0 Z"/><rect x="5.40" y="9.3" width="2" height="2"/><rect x="10.70" y="1" width="1.6" height="10.3"/><path d="M8.50 2.6 L10.80 1 L10.80 2.7 L8.50 4.0 Z"/><rect x="13.90" y="9.3" width="2" height="2"/><text x="16.80" y="11.3" font-family="Liberation Sans" font-size="14" stroke="#fafafa" stroke-width="0.3">4</text></svg>
<svg class="ic" style="left:1063.2px;top:460px;" width="12" height="15" viewBox="0 0 12 15" fill="none" stroke="#fafafa" stroke-width="1.3" stroke-linecap="round" stroke-linejoin="round"><path d="M1.2 2.6a1.6 1.6 0 0 1 1.6-1.6h4.4l3.4 3.4v7.6a1.6 1.6 0 0 1-1.6 1.6h-6.2a1.6 1.6 0 0 1-1.6-1.6z"/><path d="M7 1.2v1.9a1 1 0 0 0 1 1h2.2" stroke-width="1"/><path d="M4.8 5.2v3.2 M2.6 11.4c.9-1.5 2-2.6 3.2-2.9 M5.8 8.5l2.6 1.5" stroke-width="1"/></svg>
<div class="t" style="left:1085.5px;top:458.0px;height:20px;line-height:20px;font-size:14px;font-weight:400;color:#fafafa;letter-spacing:0.36px;-webkit-text-stroke:0.3px #fafafa;">DN - Annual Statement 2021.pdf</div>
<div class="t" style="left:1356px;top:458.0px;height:20px;line-height:20px;font-size:15px;font-weight:700;color:#fafafa;letter-spacing:0px;">2025-10-15</div>
<svg class="ic" style="left:1645.3px;top:459.8px;" width="16.5" height="16.5" viewBox="0 0 24 24" fill="none" stroke="#fafafa" stroke-width="2" stroke-linecap="round" stroke-linejoin="round"><path d="M8.34 8.34 2 9.27l5 4.87L5.82 21 12 17.77 18.18 21l-.59-3.43"/><path d="M18.42 12.76 22 9.27l-6.91-1L12 2l-1.44 2.91"/><line x1="2" x2="22" y1="2" y2="22"/></svg>
<div class="b" style="left:1708px;top:455.5px;width:23.5px;height:21px;border:1.5px solid #fafafa;border-radius:6px;background:#000"></div>
<svg class="ic" style="left:1712px;top:459px;" width="16" height="16" viewBox="0 0 24 24" fill="none" stroke="#fafafa" stroke-width="2" stroke-linecap="round" stroke-linejoin="round"><path d="M12 17h.01"/><path d="M15 2H6a2 2 0 0 0-2 2v16a2 2 0 0 0 2 2h12a2 2 0 0 0 2-2V7z"/><path d="M9.1 9a3 3 0 0 1 5.82 1c0 2-3 3-3 3"/></svg>
<div class="cnt" style="left:1742px;top:457.5px;background:#4a1628">0</div>
<div class="cnt" style="left:1766px;top:457.5px;background:#0f2d47">0</div>
<div class="cnt" style="left:1790px;top:457.5px;background:#57400f">0</div>
<div class="b" style="left:883px;top:529px;width:990px;height:1px;background:#27272a"></div>
<svg class="ic" style="left:891px;top:501px" width="16" height="16" viewBox="0 0 16 16"><rect x="0.6" y="0.6" width="14.8" height="14.8" rx="3.8" fill="none" stroke="#12b981" stroke-width="1.2"/></svg>
<svg class="ic" style="left:926px;top:502.7px" width="40" height="14" viewBox="0 0 40 14" fill="#fafafa"><rect x="2.20" y="1" width="1.6" height="10.3"/><path d="M0.00 2.6 L2.30 1 L2.30 2.7 L0.00 4.0 Z"/><rect x="5.40" y="9.3" width="2" height="2"/><rect x="10.70" y="1" width="1.6" height="10.3"/><path d="M8.50 2.6 L10.80 1 L10.80 2.7 L8.50 4.0 Z"/><rect x="13.90" y="9.3" width="2" height="2"/><text x="16.80" y="11.3" font-family="Liberation Sans" font-size="14" stroke="#fafafa" stroke-width="0.3">5</text></svg>
<svg class="ic" style="left:1063.2px;top:501px;" width="12" height="15" viewBox="0 0 12 15" fill="none" stroke="#fafafa" stroke-width="1.3" stroke-linecap="round" stroke-linejoin="round"><path d="M1.2 2.6a1.6 1.6 0 0 1 1.6-1.6h4.4l3.4 3.4v7.6a1.6 1.6 0 0 1-1.6 1.6h-6.2a1.6 1.6 0 0 1-1.6-1.6z"/><path d="M7 1.2v1.9a1 1 0 0 0 1 1h2.2" stroke-width="1"/><path d="M4.8 5.2v3.2 M2.6 11.4c.9-1.5 2-2.6 3.2-2.9 M5.8 8.5l2.6 1.5" stroke-width="1"/></svg>
<div class="t" style="left:1085.5px;top:499.0px;height:20px;line-height:20px;font-size:14px;font-weight:400;color:#fafafa;letter-spacing:0.36px;-webkit-text-stroke:0.3px #fafafa;">DN - Annual Statement 2020.pdf</div>
<div class="t" style="left:1356px;top:499.0px;height:20px;line-height:20px;font-size:15px;font-weight:700;color:#fafafa;letter-spacing:0px;">2025-10-15</div>
<svg class="ic" style="left:1645.3px;top:500.8px;" width="16.5" height="16.5" viewBox="0 0 24 24" fill="none" stroke="#fafafa" stroke-width="2" stroke-linecap="round" stroke-linejoin="round"><path d="M8.34 8.34 2 9.27l5 4.87L5.82 21 12 17.77 18.18 21l-.59-3.43"/><path d="M18.42 12.76 22 9.27l-6.91-1L12 2l-1.44 2.91"/><line x1="2" x2="22" y1="2" y2="22"/></svg>
<div class="b" style="left:1708px;top:496.5px;width:23.5px;height:21px;border:1.5px solid #fafafa;border-radius:6px;background:#000"></div>
<svg class="ic" style="left:1712px;top:500px;" width="16" height="16" viewBox="0 0 24 24" fill="none" stroke="#fafafa" stroke-width="2" stroke-linecap="round" stroke-linejoin="round"><path d="M12 17h.01"/><path d="M15 2H6a2 2 0 0 0-2 2v16a2 2 0 0 0 2 2h12a2 2 0 0 0 2-2V7z"/><path d="M9.1 9a3 3 0 0 1 5.82 1c0 2-3 3-3 3"/></svg>
<div class="cnt" style="left:1742px;top:498.5px;background:#4a1628">0</div>
<div class="cnt" style="left:1766px;top:498.5px;background:#0f2d47">0</div>
<div class="cnt" style="left:1790px;top:498.5px;background:#57400f">0</div>
<div class="b" style="left:883px;top:570px;width:990px;height:1px;background:#27272a"></div>
<svg class="ic" style="left:891px;top:542px" width="16" height="16" viewBox="0 0 16 16"><rect x="0.6" y="0.6" width="14.8" height="14.8" rx="3.8" fill="none" stroke="#12b981" stroke-width="1.2"/></svg>
<svg class="ic" style="left:926px;top:543.7px" width="40" height="14" viewBox="0 0 40 14" fill="#fafafa"><rect x="2.20" y="1" width="1.6" height="10.3"/><path d="M0.00 2.6 L2.30 1 L2.30 2.7 L0.00 4.0 Z"/><rect x="5.40" y="9.3" width="2" height="2"/><rect x="10.70" y="1" width="1.6" height="10.3"/><path d="M8.50 2.6 L10.80 1 L10.80 2.7 L8.50 4.0 Z"/><rect x="13.90" y="9.3" width="2" height="2"/><text x="16.80" y="11.3" font-family="Liberation Sans" font-size="14" stroke="#fafafa" stroke-width="0.3">6</text></svg>
<svg class="ic" style="left:1063.2px;top:542px;" width="12" height="15" viewBox="0 0 12 15" fill="none" stroke="#fafafa" stroke-width="1.3" stroke-linecap="round" stroke-linejoin="round"><path d="M1.2 2.6a1.6 1.6 0 0 1 1.6-1.6h4.4l3.4 3.4v7.6a1.6 1.6 0 0 1-1.6 1.6h-6.2a1.6 1.6 0 0 1-1.6-1.6z"/><path d="M7 1.2v1.9a1 1 0 0 0 1 1h2.2" stroke-width="1"/><path d="M4.8 5.2v3.2 M2.6 11.4c.9-1.5 2-2.6 3.2-2.9 M5.8 8.5l2.6 1.5" stroke-width="1"/></svg>
<div class="t" style="left:1085.5px;top:540.0px;height:20px;line-height:20px;font-size:14px;font-weight:400;color:#fafafa;letter-spacing:0.36px;-webkit-text-stroke:0.3px #fafafa;">DN - Annual Statement 2019.pdf</div>
<div class="t" style="left:1356px;top:540.0px;height:20px;line-height:20px;font-size:15px;font-weight:700;color:#fafafa;letter-spacing:0px;">2025-10-15</div>
<svg class="ic" style="left:1645.3px;top:541.8px;" width="16.5" height="16.5" viewBox="0 0 24 24" fill="none" stroke="#fafafa" stroke-width="2" stroke-linecap="round" stroke-linejoin="round"><path d="M8.34 8.34 2 9.27l5 4.87L5.82 21 12 17.77 18.18 21l-.59-3.43"/><path d="M18.42 12.76 22 9.27l-6.91-1L12 2l-1.44 2.91"/><line x1="2" x2="22" y1="2" y2="22"/></svg>
<div class="b" style="left:1708px;top:537.5px;width:23.5px;height:21px;border:1.5px solid #fafafa;border-radius:6px;background:#000"></div>
<svg class="ic" style="left:1712px;top:541px;" width="16" height="16" viewBox="0 0 24 24" fill="none" stroke="#fafafa" stroke-width="2" stroke-linecap="round" stroke-linejoin="round"><path d="M12 17h.01"/><path d="M15 2H6a2 2 0 0 0-2 2v16a2 2 0 0 0 2 2h12a2 2 0 0 0 2-2V7z"/><path d="M9.1 9a3 3 0 0 1 5.82 1c0 2-3 3-3 3"/></svg>
<div class="cnt" style="left:1742px;top:539.5px;background:#4a1628">0</div>
<div class="cnt" style="left:1766px;top:539.5px;background:#0f2d47">0</div>
<div class="cnt" style="left:1790px;top:539.5px;background:#57400f">0</div>
<div class="b" style="left:883px;top:611px;width:990px;height:1px;background:#27272a"></div>
<svg class="ic" style="left:891px;top:583px" width="16" height="16" viewBox="0 0 16 16"><rect x="0.6" y="0.6" width="14.8" height="14.8" rx="3.8" fill="none" stroke="#12b981" stroke-width="1.2"/></svg>
<svg class="ic" style="left:926px;top:584.7px" width="40" height="14" viewBox="0 0 40 14" fill="#fafafa"><rect x="2.20" y="1" width="1.6" height="10.3"/><path d="M0.00 2.6 L2.30 1 L2.30 2.7 L0.00 4.0 Z"/><rect x="5.40" y="9.3" width="2" height="2"/><rect x="10.70" y="1" width="1.6" height="10.3"/><path d="M8.50 2.6 L10.80 1 L10.80 2.7 L8.50 4.0 Z"/><rect x="13.90" y="9.3" width="2" height="2"/><text x="16.80" y="11.3" font-family="Liberation Sans" font-size="14" stroke="#fafafa" stroke-width="0.3">7</text></svg>
<svg class="ic" style="left:1063.2px;top:583px;" width="12" height="15" viewBox="0 0 12 15" fill="none" stroke="#fafafa" stroke-width="1.3" stroke-linecap="round" stroke-linejoin="round"><path d="M1.2 2.6a1.6 1.6 0 0 1 1.6-1.6h4.4l3.4 3.4v7.6a1.6 1.6 0 0 1-1.6 1.6h-6.2a1.6 1.6 0 0 1-1.6-1.6z"/><path d="M7 1.2v1.9a1 1 0 0 0 1 1h2.2" stroke-width="1"/><path d="M4.8 5.2v3.2 M2.6 11.4c.9-1.5 2-2.6 3.2-2.9 M5.8 8.5l2.6 1.5" stroke-width="1"/></svg>
<div class="t" style="left:1085.5px;top:581.0px;height:20px;line-height:20px;font-size:14px;font-weight:400;color:#fafafa;letter-spacing:0.36px;-webkit-text-stroke:0.3px #fafafa;">DN - Annual Statement 2018.pdf</div>
<div class="t" style="left:1356px;top:581.0px;height:20px;line-height:20px;font-size:15px;font-weight:700;color:#fafafa;letter-spacing:0px;">2025-10-15</div>
<svg class="ic" style="left:1645.3px;top:582.8px;" width="16.5" height="16.5" viewBox="0 0 24 24" fill="none" stroke="#fafafa" stroke-width="2" stroke-linecap="round" stroke-linejoin="round"><path d="M8.34 8.34 2 9.27l5 4.87L5.82 21 12 17.77 18.18 21l-.59-3.43"/><path d="M18.42 12.76 22 9.27l-6.91-1L12 2l-1.44 2.91"/><line x1="2" x2="22" y1="2" y2="22"/></svg>
<div class="b" style="left:1708px;top:578.5px;width:23.5px;height:21px;border:1.5px solid #fafafa;border-radius:6px;background:#000"></div>
<svg class="ic" style="left:1712px;top:582px;" width="16" height="16" viewBox="0 0 24 24" fill="none" stroke="#fafafa" stroke-width="2" stroke-linecap="round" stroke-linejoin="round"><path d="M12 17h.01"/><path d="M15 2H6a2 2 0 0 0-2 2v16a2 2 0 0 0 2 2h12a2 2 0 0 0 2-2V7z"/><path d="M9.1 9a3 3 0 0 1 5.82 1c0 2-3 3-3 3"/></svg>
<div class="cnt" style="left:1742px;top:580.5px;background:#4a1628">0</div>
<div class="cnt" style="left:1766px;top:580.5px;background:#0f2d47">0</div>
<div class="cnt" style="left:1790px;top:580.5px;background:#57400f">0</div>
<div class="b" style="left:883px;top:652px;width:990px;height:1px;background:#27272a"></div>
<svg class="ic" style="left:891px;top:624px" width="16" height="16" viewBox="0 0 16 16"><rect x="0.6" y="0.6" width="14.8" height="14.8" rx="3.8" fill="none" stroke="#12b981" stroke-width="1.2"/></svg>
<svg class="ic" style="left:926px;top:625.7px" width="40" height="14" viewBox="0 0 40 14" fill="#fafafa"><rect x="2.20" y="1" width="1.6" height="10.3"/><path d="M0.00 2.6 L2.30 1 L2.30 2.7 L0.00 4.0 Z"/><rect x="5.40" y="9.3" width="2" height="2"/><rect x="10.70" y="1" width="1.6" height="10.3"/><path d="M8.50 2.6 L10.80 1 L10.80 2.7 L8.50 4.0 Z"/><rect x="13.90" y="9.3" width="2" height="2"/><text x="16.80" y="11.3" font-family="Liberation Sans" font-size="14" stroke="#fafafa" stroke-width="0.3">8</text></svg>
<svg class="ic" style="left:1063.2px;top:624px;" width="12" height="15" viewBox="0 0 12 15" fill="none" stroke="#fafafa" stroke-width="1.3" stroke-linecap="round" stroke-linejoin="round"><path d="M1.2 2.6a1.6 1.6 0 0 1 1.6-1.6h4.4l3.4 3.4v7.6a1.6 1.6 0 0 1-1.6 1.6h-6.2a1.6 1.6 0 0 1-1.6-1.6z"/><path d="M7 1.2v1.9a1 1 0 0 0 1 1h2.2" stroke-width="1"/><path d="M4.8 5.2v3.2 M2.6 11.4c.9-1.5 2-2.6 3.2-2.9 M5.8 8.5l2.6 1.5" stroke-width="1"/></svg>
<div class="t" style="left:1085.5px;top:622.0px;height:20px;line-height:20px;font-size:14px;font-weight:400;color:#fafafa;letter-spacing:0.36px;-webkit-text-stroke:0.3px #fafafa;">DN - Annual Statement 2017.pdf</div>
<div class="t" style="left:1356px;top:622.0px;height:20px;line-height:20px;font-size:15px;font-weight:700;color:#fafafa;letter-spacing:0px;">2025-10-15</div>
<svg class="ic" style="left:1645.3px;top:623.8px;" width="16.5" height="16.5" viewBox="0 0 24 24" fill="none" stroke="#fafafa" stroke-width="2" stroke-linecap="round" stroke-linejoin="round"><path d="M8.34 8.34 2 9.27l5 4.87L5.82 21 12 17.77 18.18 21l-.59-3.43"/><path d="M18.42 12.76 22 9.27l-6.91-1L12 2l-1.44 2.91"/><line x1="2" x2="22" y1="2" y2="22"/></svg>
<div class="b" style="left:1708px;top:619.5px;width:23.5px;height:21px;border:1.5px solid #fafafa;border-radius:6px;background:#000"></div>
<svg class="ic" style="left:1712px;top:623px;" width="16" height="16" viewBox="0 0 24 24" fill="none" stroke="#fafafa" stroke-width="2" stroke-linecap="round" stroke-linejoin="round"><path d="M12 17h.01"/><path d="M15 2H6a2 2 0 0 0-2 2v16a2 2 0 0 0 2 2h12a2 2 0 0 0 2-2V7z"/><path d="M9.1 9a3 3 0 0 1 5.82 1c0 2-3 3-3 3"/></svg>
<div class="cnt" style="left:1742px;top:621.5px;background:#4a1628">0</div>
<div class="cnt" style="left:1766px;top:621.5px;background:#0f2d47">0</div>
<div class="cnt" style="left:1790px;top:621.5px;background:#57400f">0</div>
<div class="b" style="left:883px;top:693px;width:990px;height:1px;background:#27272a"></div>
<svg class="ic" style="left:891px;top:665px" width="16" height="16" viewBox="0 0 16 16"><rect x="0.6" y="0.6" width="14.8" height="14.8" rx="3.8" fill="none" stroke="#12b981" stroke-width="1.2"/></svg>
<svg class="ic" style="left:926px;top:666.7px" width="40" height="14" viewBox="0 0 40 14" fill="#fafafa"><rect x="2.20" y="1" width="1.6" height="10.3"/><path d="M0.00 2.6 L2.30 1 L2.30 2.7 L0.00 4.0 Z"/><rect x="5.40" y="9.3" width="2" height="2"/><rect x="10.70" y="1" width="1.6" height="10.3"/><path d="M8.50 2.6 L10.80 1 L10.80 2.7 L8.50 4.0 Z"/><rect x="13.90" y="9.3" width="2" height="2"/><text x="16.80" y="11.3" font-family="Liberation Sans" font-size="14" stroke="#fafafa" stroke-width="0.3">9</text></svg>
<svg class="ic" style="left:1063.2px;top:665px;" width="12" height="15" viewBox="0 0 12 15" fill="none" stroke="#fafafa" stroke-width="1.3" stroke-linecap="round" stroke-linejoin="round"><path d="M1.2 2.6a1.6 1.6 0 0 1 1.6-1.6h4.4l3.4 3.4v7.6a1.6 1.6 0 0 1-1.6 1.6h-6.2a1.6 1.6 0 0 1-1.6-1.6z"/><path d="M7 1.2v1.9a1 1 0 0 0 1 1h2.2" stroke-width="1"/><path d="M4.8 5.2v3.2 M2.6 11.4c.9-1.5 2-2.6 3.2-2.9 M5.8 8.5l2.6 1.5" stroke-width="1"/></svg>
<div class="t" style="left:1085.5px;top:663.0px;height:20px;line-height:20px;font-size:14px;font-weight:400;color:#fafafa;letter-spacing:0.36px;-webkit-text-stroke:0.3px #fafafa;">DN - Annual Statement 2016.pdf</div>
<div class="t" style="left:1356px;top:663.0px;height:20px;line-height:20px;font-size:15px;font-weight:700;color:#fafafa;letter-spacing:0px;">2025-10-15</div>
<svg class="ic" style="left:1645.3px;top:664.8px;" width="16.5" height="16.5" viewBox="0 0 24 24" fill="none" stroke="#fafafa" stroke-width="2" stroke-linecap="round" stroke-linejoin="round"><path d="M8.34 8.34 2 9.27l5 4.87L5.82 21 12 17.77 18.18 21l-.59-3.43"/><path d="M18.42 12.76 22 9.27l-6.91-1L12 2l-1.44 2.91"/><line x1="2" x2="22" y1="2" y2="22"/></svg>
<div class="b" style="left:1708px;top:660.5px;width:23.5px;height:21px;border:1.5px solid #fafafa;border-radius:6px;background:#000"></div>
<svg class="ic" style="left:1712px;top:664px;" width="16" height="16" viewBox="0 0 24 24" fill="none" stroke="#fafafa" stroke-width="2" stroke-linecap="round" stroke-linejoin="round"><path d="M12 17h.01"/><path d="M15 2H6a2 2 0 0 0-2 2v16a2 2 0 0 0 2 2h12a2 2 0 0 0 2-2V7z"/><path d="M9.1 9a3 3 0 0 1 5.82 1c0 2-3 3-3 3"/></svg>
<div class="cnt" style="left:1742px;top:662.5px;background:#4a1628">0</div>
<div class="cnt" style="left:1766px;top:662.5px;background:#0f2d47">0</div>
<div class="cnt" style="left:1790px;top:662.5px;background:#57400f">0</div>
<div class="b" style="left:883px;top:734px;width:990px;height:1px;background:#27272a"></div>
<svg class="ic" style="left:891px;top:706px" width="16" height="16" viewBox="0 0 16 16"><rect x="0.6" y="0.6" width="14.8" height="14.8" rx="3.8" fill="none" stroke="#12b981" stroke-width="1.2"/></svg>
<svg class="ic" style="left:926px;top:707.7px" width="40" height="14" viewBox="0 0 40 14" fill="#fafafa"><rect x="2.20" y="1" width="1.6" height="10.3"/><path d="M0.00 2.6 L2.30 1 L2.30 2.7 L0.00 4.0 Z"/><rect x="5.40" y="9.3" width="2" height="2"/><rect x="10.70" y="1" width="1.6" height="10.3"/><path d="M8.50 2.6 L10.80 1 L10.80 2.7 L8.50 4.0 Z"/><rect x="13.90" y="9.3" width="2" height="2"/><rect x="19.20" y="1" width="1.6" height="10.3"/><path d="M17.00 2.6 L19.30 1 L19.30 2.7 L17.00 4.0 Z"/><text x="22.20" y="11.3" font-family="Liberation Sans" font-size="14" stroke="#fafafa" stroke-width="0.3">0</text></svg>
<svg class="ic" style="left:1063.2px;top:706px;" width="12" height="15" viewBox="0 0 12 15" fill="none" stroke="#fafafa" stroke-width="1.3" stroke-linecap="round" stroke-linejoin="round"><path d="M1.2 2.6a1.6 1.6 0 0 1 1.6-1.6h4.4l3.4 3.4v7.6a1.6 1.6 0 0 1-1.6 1.6h-6.2a1.6 1.6 0 0 1-1.6-1.6z"/><path d="M7 1.2v1.9a1 1 0 0 0 1 1h2.2" stroke-width="1"/><path d="M4.8 5.2v3.2 M2.6 11.4c.9-1.5 2-2.6 3.2-2.9 M5.8 8.5l2.6 1.5" stroke-width="1"/></svg>
<div class="t" style="left:1085.5px;top:704.0px;height:20px;line-height:20px;font-size:14px;font-weight:400;color:#fafafa;letter-spacing:0.36px;-webkit-text-stroke:0.3px #fafafa;">DN - Annual Statement 2015.pdf</div>
<div class="t" style="left:1356px;top:704.0px;height:20px;line-height:20px;font-size:15px;font-weight:700;color:#fafafa;letter-spacing:0px;">2025-10-15</div>
<svg class="ic" style="left:1645.3px;top:705.8px;" width="16.5" height="16.5" viewBox="0 0 24 24" fill="none" stroke="#fafafa" stroke-width="2" stroke-linecap="round" stroke-linejoin="round"><path d="M8.34 8.34 2 9.27l5 4.87L5.82 21 12 17.77 18.18 21l-.59-3.43"/><path d="M18.42 12.76 22 9.27l-6.91-1L12 2l-1.44 2.91"/><line x1="2" x2="22" y1="2" y2="22"/></svg>
<div class="b" style="left:1708px;top:701.5px;width:23.5px;height:21px;border:1.5px solid #fafafa;border-radius:6px;background:#000"></div>
<svg class="ic" style="left:1712px;top:705px;" width="16" height="16" viewBox="0 0 24 24" fill="none" stroke="#fafafa" stroke-width="2" stroke-linecap="round" stroke-linejoin="round"><path d="M12 17h.01"/><path d="M15 2H6a2 2 0 0 0-2 2v16a2 2 0 0 0 2 2h12a2 2 0 0 0 2-2V7z"/><path d="M9.1 9a3 3 0 0 1 5.82 1c0 2-3 3-3 3"/></svg>
<div class="cnt" style="left:1742px;top:703.5px;background:#4a1628">0</div>
<div class="cnt" style="left:1766px;top:703.5px;background:#0f2d47">0</div>
<div class="cnt" style="left:1790px;top:703.5px;background:#57400f">0</div>
<svg class="ic" style="left:891px;top:747px" width="16" height="16" viewBox="0 0 16 16"><rect x="0.6" y="0.6" width="14.8" height="14.8" rx="3.8" fill="none" stroke="#12b981" stroke-width="1.2"/></svg>
<svg class="ic" style="left:926px;top:748.7px" width="40" height="14" viewBox="0 0 40 14" fill="#fafafa"><rect x="2.20" y="1" width="1.6" height="10.3"/><path d="M0.00 2.6 L2.30 1 L2.30 2.7 L0.00 4.0 Z"/><rect x="5.40" y="9.3" width="2" height="2"/><rect x="10.70" y="1" width="1.6" height="10.3"/><path d="M8.50 2.6 L10.80 1 L10.80 2.7 L8.50 4.0 Z"/><rect x="13.90" y="9.3" width="2" height="2"/><rect x="19.20" y="1" width="1.6" height="10.3"/><path d="M17.00 2.6 L19.30 1 L19.30 2.7 L17.00 4.0 Z"/><rect x="24.60" y="1" width="1.6" height="10.3"/><path d="M22.40 2.6 L24.70 1 L24.70 2.7 L22.40 4.0 Z"/></svg>
<svg class="ic" style="left:1063.2px;top:747px;" width="12" height="15" viewBox="0 0 12 15" fill="none" stroke="#fafafa" stroke-width="1.3" stroke-linecap="round" stroke-linejoin="round"><path d="M1.2 2.6a1.6 1.6 0 0 1 1.6-1.6h4.4l3.4 3.4v7.6a1.6 1.6 0 0 1-1.6 1.6h-6.2a1.6 1.6 0 0 1-1.6-1.6z"/><path d="M7 1.2v1.9a1 1 0 0 0 1 1h2.2" stroke-width="1"/><path d="M4.8 5.2v3.2 M2.6 11.4c.9-1.5 2-2.6 3.2-2.9 M5.8 8.5l2.6 1.5" stroke-width="1"/></svg>
<div class="t" style="left:1085.5px;top:745.0px;height:20px;line-height:20px;font-size:14px;font-weight:400;color:#fafafa;letter-spacing:0.36px;-webkit-text-stroke:0.3px #fafafa;">DN - Annual Statement 2014.pdf</div>
<div class="t" style="left:1356px;top:745.0px;height:20px;line-height:20px;font-size:15px;font-weight:700;color:#fafafa;letter-spacing:0px;">2025-10-15</div>
<svg class="ic" style="left:1645.3px;top:746.8px;" width="16.5" height="16.5" viewBox="0 0 24 24" fill="none" stroke="#fafafa" stroke-width="2" stroke-linecap="round" stroke-linejoin="round"><path d="M8.34 8.34 2 9.27l5 4.87L5.82 21 12 17.77 18.18 21l-.59-3.43"/><path d="M18.42 12.76 22 9.27l-6.91-1L12 2l-1.44 2.91"/><line x1="2" x2="22" y1="2" y2="22"/></svg>
<div class="b" style="left:1708px;top:742.5px;width:23.5px;height:21px;border:1.5px solid #fafafa;border-radius:6px;background:#000"></div>
<svg class="ic" style="left:1712px;top:746px;" width="16" height="16" viewBox="0 0 24 24" fill="none" stroke="#fafafa" stroke-width="2" stroke-linecap="round" stroke-linejoin="round"><path d="M12 17h.01"/><path d="M15 2H6a2 2 0 0 0-2 2v16a2 2 0 0 0 2 2h12a2 2 0 0 0 2-2V7z"/><path d="M9.1 9a3 3 0 0 1 5.82 1c0 2-3 3-3 3"/></svg>
<div class="cnt" style="left:1742px;top:744.5px;background:#4a1628">0</div>
<div class="cnt" style="left:1766px;top:744.5px;background:#0f2d47">0</div>
<div class="cnt" style="left:1790px;top:744.5px;background:#57400f">0</div>
</body></html>
